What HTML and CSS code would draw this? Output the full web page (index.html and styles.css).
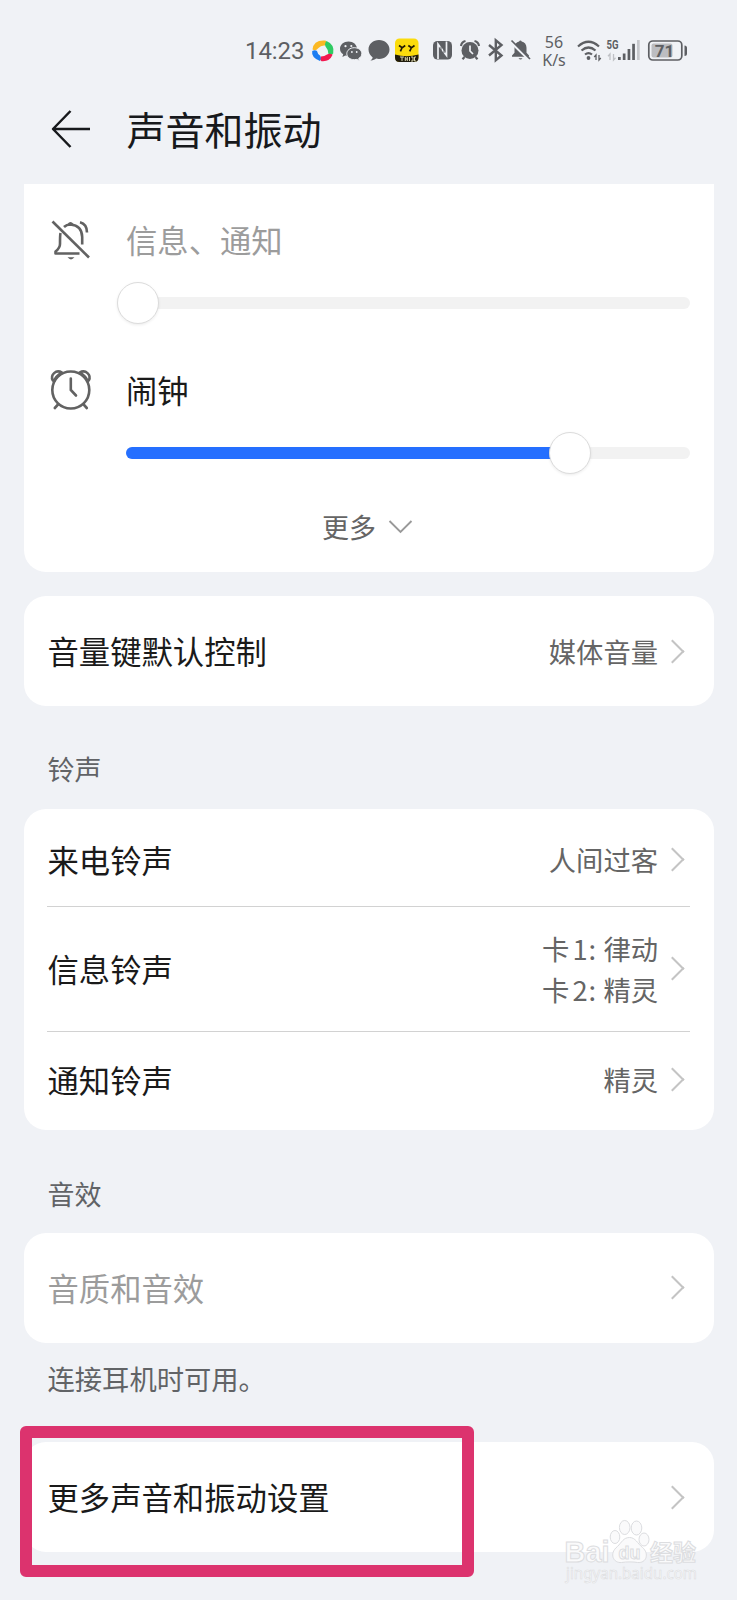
FILE: index.html
```html
<!DOCTYPE html>
<html lang="zh-CN">
<head>
<meta charset="utf-8">
<title>声音和振动</title>
<link rel="stylesheet" href="styles.css">
</head>
<body>
<div class="screen">
  <div class="status">
    <span class="time">14:23</span>
    <svg class="st" width="112" height="28" viewBox="310 36 112 28">
      <g>
        <path d="M312.500 49.500Q313.500 39.500 325.500 40.500Q327.500 42.500 325 45.500Q321 45 318.500 48Q315.500 51.500 312.500 49.500Z" fill="#fbb924"/>
        <path d="M326.500 41Q335 44.500 333.200 53.500Q330 56.500 328.300 53.500Q328.500 50 326.500 48Q323.500 44.500 326.500 41Z" fill="#2fcb63"/>
        <path d="M332.600 54.800Q329.500 62 321.500 61.200Q319 59.500 321 56.500Q324.500 56.500 327 54.500Q330 53 332.600 54.800Z" fill="#f2184f"/>
        <path d="M320 61Q311 57.500 312.200 51Q315 49.500 317 51Q317.500 54 320 55.500Q321.500 57.500 320 61Z" fill="#1c7df2"/>
      </g>
      <path fill="#5d5f63" d="M348.500 41.500c-4.800 0-8.500 3.200-8.500 7.200 0 2.300 1.200 4.200 3.200 5.600l-.8 2.700 3-1.500c1.200.3 2 .4 3.100.4 4.800 0 8.500-3.200 8.500-7.200s-3.700-7.200-8.500-7.200z"/>
      <path fill="#5d5f63" stroke="#f0f2f6" stroke-width="1" d="M354.300 47.700c-4.300 0-7.500 2.600-7.500 6s3.200 6 7.500 6c.9 0 1.800-.1 2.600-.3l2.400 1.300-.6-2.200c1.800-1.100 3.100-2.800 3.100-4.800 0-3.400-3.200-6-7.500-6z"/>
      <path fill="#5d5f63" d="M379 40c-5.800 0-10.500 4-10.500 9.600 0 3.300 1.700 6 4.200 7.800-.3 1.300-1.300 2.300-2.300 3 2.500.1 4.300-.6 5.800-1.800 1 .3 1.800.4 2.800.4 5.800 0 10.500-4.200 10.500-9.500S384.800 40 379 40z"/>
      <g fill="#f0f2f6"><circle cx="345.500" cy="46.200" r="1.100"/><circle cx="351.300" cy="46" r="1.100"/><circle cx="351.900" cy="52" r=".9"/><circle cx="356.700" cy="52" r=".9"/></g>
      <rect x="395" y="38.500" width="23.500" height="23.500" rx="4.500" fill="#fbdc0c"/>
      <path d="M395 54.500Q406.700 58 418.500 54.500V57.500Q418.500 62 414 62H399.500Q395 62 395 57.500Z" fill="#1f1b0c"/>
      <path d="M399 45.500l3.200 2.300 3-2.300m-3 2-1.800 3.800M408.300 45.500l3.200 2.300 3-2.300m-3 2-1.800 3.800" fill="none" stroke="#211b05" stroke-width="1.700"/>
      <path d="M400 57h4m-2 0v4m3.300-4v4m2-4v4m-2-2h2m2.200-2v4m1.500-4h2v4h-2m5-4h-1.500v4h1.500" fill="none" stroke="#dad5ad" stroke-width="1"/>
    </svg>
    <svg class="st" width="107" height="28" viewBox="422 36 107 28" overflow="visible">
      <rect x="433" y="41" width="19" height="18.500" rx="4.500" fill="#5d5f63"/>
      <path d="M438 59V44L446.500 55.500V41.500" fill="none" stroke="#f0f2f6" stroke-width="1.700"/>
      <path d="M441 46.500v10M444 43v10" fill="none" stroke="#5d5f63" stroke-width="1"/>
      <circle cx="470" cy="50.500" r="8.500" fill="#5d5f63"/>
      <path d="M464.500 57l-2 2.300M475.500 57l2 2.300M461 46q.5-4 4.500-5M479 46q-.5-4-4.500-5" stroke="#5d5f63" stroke-width="2.200" fill="none"/>
      <path d="M470 45.500v5.500l3 3" fill="none" stroke="#f0f2f6" stroke-width="1.700"/>
      <path d="M489 45l12.500 10.500-5.700 4.700V40.300l5.700 4.700L489 55.500" fill="none" stroke="#5d5f63" stroke-width="2.400"/>
      <path d="M512 56.800h17v-1.300l-2.500-2.800v-5c0-3.300-2-5.600-4.800-6.200a1.400 1.400 0 0 0-2.600 0c-2.700.6-4.600 2.900-4.600 6.200v5l-2.500 2.800zM518.500 58.300h4q-2 2.500-4 0z" fill="#5d5f63"/>
      <path d="M511 42l18.500 18" stroke="#f0f2f6" stroke-width="3"/>
      <path d="M511.500 40.500l18.500 18.500" stroke="#5d5f63" stroke-width="1.700"/>
    </svg>
    <div class="speed"><span>56</span><span>K/s</span></div>
    <svg class="st" width="116" height="28" viewBox="574 36 116 28">
      <g fill="none" stroke="#5d5f63" stroke-width="2.200">
        <path d="M578 46.500q10.500-9.500 21 0M581.500 50.500q7-6 14 0M585 54.500q3.500-2.800 7 0"/>
      </g>
      <circle cx="588.500" cy="58" r="1.900" fill="#5d5f63"/>
      <path d="M596 60v-5l-1.800 2M599 55v5l1.800-2" fill="none" stroke="#5d5f63" stroke-width="1.300"/>
      <text class="net" x="606.500" y="48.500" textLength="12" lengthAdjust="spacingAndGlyphs">5G</text>
      <path d="M610 60v-6l-2 2.300M613.500 54v6l2-2.300" fill="none" stroke="#bfc1c5" stroke-width="1.300"/>
      <g fill="#5d5f63"><rect x="618" y="57" width="2.700" height="3"/><rect x="622.800" y="53.500" width="2.700" height="6.500"/><rect x="627.600" y="49" width="2.700" height="11"/><rect x="632.200" y="43.800" width="2.700" height="16.200"/></g>
      <rect x="637" y="40" width="2.700" height="20" fill="#c6c8cc"/>
      <rect x="648.800" y="41" width="33" height="19" rx="4" fill="none" stroke="#5d5f63" stroke-width="1.700"/>
      <rect x="651.500" y="43.500" width="21" height="14" rx="2" fill="#bcbdc1"/>
      <path d="M684.500 45.500q2.500 0 2.500 2.500v5.500q0 2.500-2.500 2.500z" fill="#5d5f63"/>
      <text class="battery" x="664.500" y="56.500" text-anchor="middle">71</text>
    </svg>
  </div>

  <header class="header">
    <svg width="42" height="42" viewBox="0 0 42 42"><path d="M20.500 3L3 21 20.500 39M3 21H40" fill="none" stroke="#17191c" stroke-width="2.500" stroke-linejoin="round"/></svg>
    <h1>声音和振动</h1>
  </header>

  <main>
    <section class="card volumes">
      <div class="volume muted">
        <svg class="vicon" width="42" height="42" viewBox="0 0 42 42">
          <g fill="none" stroke="#626262" stroke-width="2.600" stroke-linejoin="round">
            <path d="M14 8Q16.500 5.500 20.500 5.500 32 6.500 32.200 18v7.500M10.500 14Q10 16 10 25 10 29 5.500 32.500V34.500H29.500"/>
            <path d="M30 3.200Q37 5 37 13.500"/>
            <path d="M2.500 2.500L39 38.500"/>
          </g>
          <path d="M17.500 38.300h7q-3.500 4.200-7 0zM17.500 5q3-4 6 0z" fill="#626262"/>
        </svg>
        <span class="label">信息、通知</span>
        <div class="slider"><i class="knob" style="left:12px"></i></div>
      </div>
      <div class="volume">
        <svg class="vicon" width="42" height="42" viewBox="0 0 42 42" overflow="visible">
          <g fill="none" stroke="#626262" stroke-width="2.600" stroke-linecap="round">
            <circle cx="20.800" cy="21" r="18.500"/>
            <path d="M2.800 11.500C0 6 6 0 12 3.700M38.800 11.500C41.600 6 35.600 0 29.600 3.700M3.800 12.500Q6 7 11.500 4M37.800 12.500Q35.600 7 30.100 4M8 35.500L4.800 39M33.600 35.500L36.800 39"/>
            <path d="M20.800 9.500V21L26 26.500"/>
          </g>
        </svg>
        <span class="label">闹钟</span>
        <div class="slider"><i class="fill" style="width:444px"></i><i class="knob" style="left:444px"></i></div>
      </div>
      <div class="more"><span>更多</span><svg width="25" height="16" viewBox="0 0 25 16"><path d="M1.500 2L12.500 13 23.500 2" fill="none" stroke="#999" stroke-width="1.900"/></svg></div>
    </section>

    <section class="card volkey">
      <div class="row"><span class="label">音量键默认控制</span><span class="value">媒体音量</span><i class="chev"></i></div>
    </section>

    <h2 class="ring-title">铃声</h2>
    <section class="card ring">
      <div class="row"><span class="label">来电铃声</span><span class="value">人间过客</span><i class="chev"></i></div>
      <div class="row tall"><span class="label">信息铃声</span><span class="value">卡<b>1:</b>律动<br>卡<b>2:</b>精灵</span><i class="chev"></i></div>
      <div class="row"><span class="label">通知铃声</span><span class="value">精灵</span><i class="chev"></i></div>
    </section>

    <h2 class="fx-title">音效</h2>
    <section class="card">
      <div class="row muted"><span class="label">音质和音效</span><i class="chev"></i></div>
    </section>
    <p class="hint">连接耳机时可用。</p>

    <section class="card last">
      <div class="row"><span class="label">更多声音和振动设置</span><i class="chev"></i></div>
      <div class="highlight"></div>
    </section>
  </main>

  <svg class="watermark" width="140" height="70" viewBox="562 1516 140 70">
    <g class="wm">
      <text x="564.500" y="1561.500" class="wm-big" textLength="45" lengthAdjust="spacingAndGlyphs">Bai</text>
      <ellipse cx="615" cy="1537" rx="4.800" ry="6.500"/><ellipse cx="624.700" cy="1527.500" rx="5.300" ry="7"/><ellipse cx="636.500" cy="1528" rx="5.300" ry="7"/><ellipse cx="644" cy="1539.500" rx="5" ry="6.500"/>
      <path d="M629.500 1537.500c-6 0-8 5-12 9-9 7-4 17 4 16 5-.8 12-.8 16 0 9 1 12-9 5-15-5-4-7-10-13-10z"/>
      <text x="618.500" y="1558.500" class="wm-du">du</text>
      <text x="650" y="1560.500" class="wm-cn">经验</text>
      <text x="566" y="1579" class="wm-url" textLength="131" lengthAdjust="spacingAndGlyphs">jingyan.baidu.com</text>
    </g>
  </svg>
</div>
</body>
</html>
```
FILE: styles.css
```css
* { box-sizing: border-box; }
body {
  margin: 0;
  background: #f0f2f6;
  font-family: "Noto Sans CJK SC", "Noto Sans", sans-serif;
  color: #1a1a1a;
}
.screen {
  position: relative;
  width: 737px;
  height: 1600px;
  overflow: hidden;
}
.status {
  display: flex;
  align-items: flex-start;
  height: 84px;
  padding: 36px 0 0 245px;
  color: #5d5f63;
}
.time {
  width: 65px;
  font: 24px/30px "Roboto", sans-serif;
  letter-spacing: -0.1px;
}
.st { flex: none; display: block; }
.speed {
  display: flex;
  flex-direction: column;
  width: 45px;
  margin-top: -3px;
  padding-left: 5px;
  text-align: center;
  font: 16px/18px "Noto Sans", sans-serif;
}
.net { font: bold 12px "Roboto", sans-serif; fill: #5d5f63; }
.battery { font: bold 17px "Roboto", sans-serif; fill: #5d5f63; }
.header {
  display: flex;
  align-items: center;
  height: 90px;
  margin-bottom: 10px;
  padding-left: 50px;
}
.header h1 {
  margin: -3px 0 0 34.500px;
  font-size: 39px;
  font-weight: 400;
  line-height: 60px;
  color: #17191c;
}
main { padding: 0 23.500px; }
.card {
  background: #fff;
  border-radius: 22px;
  padding: 4px 23.500px;
}
.volumes {
  height: 388px;
  padding: 32px 23.500px 0 26.500px;
  border-radius: 0 0 22px 22px;
}
.volume {
  display: grid;
  grid-template-columns: 76px 1fr;
  grid-template-rows: 50px 43px;
  height: 149.500px;
}
.vicon { margin-top: 3px; }
.volume .label { line-height: 48px; }
.label { font-size: 31.350px; white-space: nowrap; }
.row .label { margin-top: -1px; padding-left: 0.500px; }
.muted .label { color: #9c9c9c; }
.slider {
  grid-column: 2;
  position: relative;
  height: 12px;
  margin-top: 31px;
  border-radius: 6px;
  background: #f2f2f2;
}
.fill {
  display: block;
  height: 12px;
  border-radius: 6px;
  background: #256fff;
}
.knob {
  position: absolute;
  top: -15px;
  width: 42px;
  height: 42px;
  margin-left: -21px;
  border: 1px solid #dcdcdc;
  border-radius: 50%;
  background: #fff;
  box-shadow: 0 1px 3px rgba(0, 0, 0, 0.08);
}
.more {
  display: flex;
  justify-content: center;
  align-items: center;
  gap: 12px;
  height: 24px;
  color: #656565;
  font-size: 27px;
  padding-right: 5px;
}
.more span { margin-top: -2px; }
.volkey { margin-top: 24px; }
.row {
  display: flex;
  align-items: center;
  height: 102px;
}
.row .label { flex: 1; }
.value {
  color: #656565;
  font-size: 27.300px;
  line-height: 41px;
}
.value b {
  display: inline-block;
  width: 34px;
  padding-left: 3px;
  font-weight: 400;
  letter-spacing: 1px;
}
.chev {
  width: 17px;
  height: 17px;
  margin: 0 9px 0 6px;
  border: solid #c4c4c4;
  border-width: 2.500px 2.500px 0 0;
  transform: rotate(45deg);
}
.ring .row { height: 94px; }
.ring .row.tall {
  height: 126px;
  margin-top: -1px;
  border: solid #d2d2d2;
  border-width: 1px 0;
}
.ring .row.tall + .row { height: 96px; }
h2, .hint {
  margin: 0;
  padding-left: 24px;
  font-size: 27px;
  font-weight: 400;
  line-height: 40px;
  color: #616366;
}
.ring-title { padding-top: 43px; height: 102.500px; }
.ring { height: 321.500px; }
.ring + .fx-title { padding-top: 43.500px; height: 102.500px; }
.hint { padding-top: 15px; height: 99.500px; font-size: 27.300px; }
.last { position: relative; height: 110px; }
.highlight {
  position: absolute;
  left: -3.500px;
  top: -16.500px;
  width: 454px;
  height: 151px;
  border: 12px solid #dc336e;
  border-radius: 6px;
}
.watermark { position: absolute; left: 562px; top: 1516px; }
.wm { fill: #fafafb; stroke: #dcdde0; stroke-width: 1; }
.wm-big { font: bold 30px "Liberation Sans", sans-serif; }
.wm-du { font: bold 18px "Liberation Sans", sans-serif; }
.wm-cn { font: bold 23px "Noto Sans CJK SC", sans-serif; }
.wm-url { font: 16px "Noto Sans", sans-serif; stroke-width: 0.6; }
```
